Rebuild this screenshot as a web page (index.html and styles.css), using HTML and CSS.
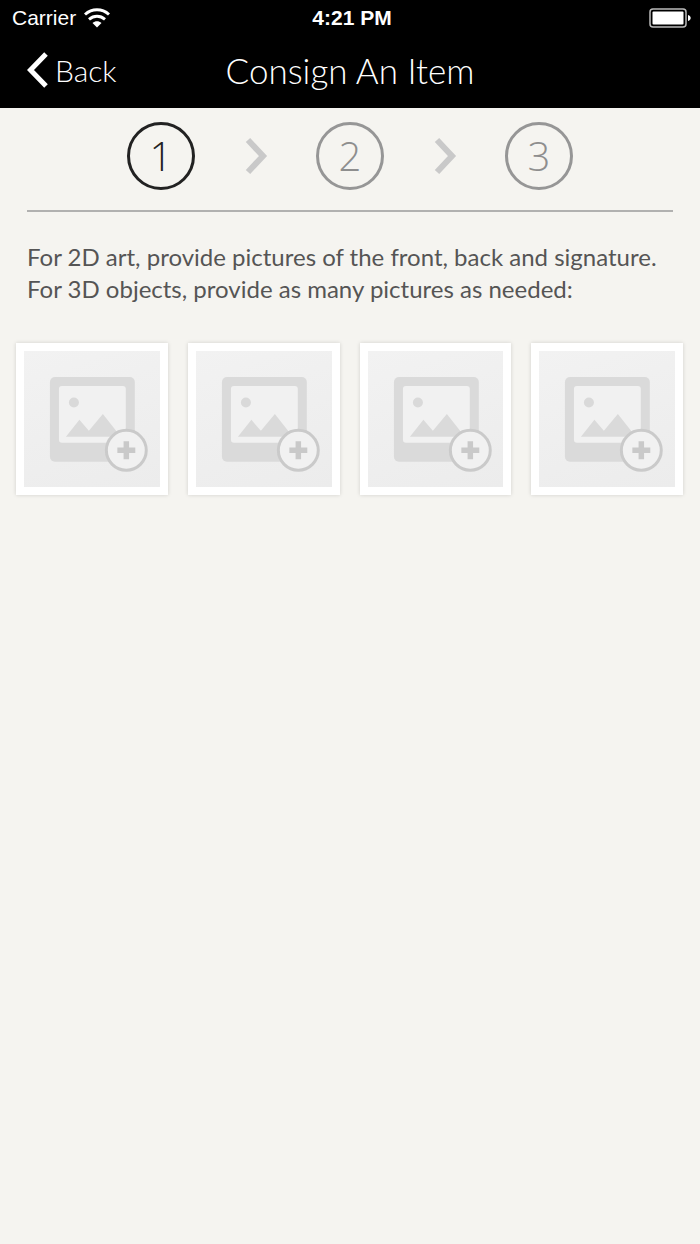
FILE: index.html
```html
<!DOCTYPE html>
<html lang="en">
<head>
    <meta charset="UTF-8">
    <meta name="viewport" content="width=device-width, initial-scale=1.0">
    <title>Consign An Item</title>
    <link rel="stylesheet" href="styles.css">
</head>
<body>
    <header class="header">
        <!-- Status bar -->
        <div class="status-bar">
            <div class="carrier">
                <span>Carrier</span>
                <svg width="26" height="20" viewBox="0 0 26 20" fill="none" stroke="#fff" stroke-width="3">
                    <path d="M1 6.5C8 .2 18 .2 25 6.5"/>
                    <path d="M5 11.300c4.800-4 11.200-4 16 0"/>
                    <path d="M13 19.500L8.500 15c2.700-2.300 6.300-2.300 9 0z" fill="#fff" stroke="none"/>
                </svg>
            </div>
            <span class="time">4:21 PM</span>
            <svg class="battery" width="43" height="20" viewBox="0 0 43 20">
                <rect x="1" y="1" width="36" height="18" rx="3" fill="none" stroke="#bbb" stroke-width="1.500"/>
                <rect x="3.500" y="3.500" width="31" height="13" rx="1" fill="#fff"/>
                <path d="M39 7c3.600 1 3.600 5 0 6z" fill="#fff"/>
            </svg>
        </div>
        <!-- Navigation bar -->
        <nav class="nav-bar">
            <button class="back-button" type="button">
                <svg width="22" height="36" viewBox="0 0 22 36" fill="none" stroke="#fff" stroke-width="5">
                    <path d="M19 2L3.500 18 19 34"/>
                </svg>
                Back
            </button>
            <h1 class="title">Consign An Item</h1>
        </nav>
    </header>

    <main class="content">
        <!-- Step indicator -->
        <ol class="steps">
            <li class="step active">1</li>
            <li class="arrow" aria-hidden="true">
                <svg width="24" height="38" viewBox="0 0 24 38" fill="none" stroke="#c9c9c9" stroke-width="6">
                    <path d="M4 3l15 16L4 35"/>
                </svg>
            </li>
            <li class="step">2</li>
            <li class="arrow" aria-hidden="true">
                <svg width="24" height="38" viewBox="0 0 24 38" fill="none" stroke="#c9c9c9" stroke-width="6">
                    <path d="M4 3l15 16L4 35"/>
                </svg>
            </li>
            <li class="step">3</li>
        </ol>

        <p class="instructions">For 2D art, provide pictures of the front, back and signature.<br>For 3D objects, provide as many pictures as needed:</p>

        <!-- Shared photo placeholder -->
        <svg class="symbols" width="0" height="0">
            <symbol id="add-photo" viewBox="0 0 136 136">
                <rect x="26" y="26" width="85" height="85" rx="5" fill="#dadada"/>
                <rect x="35" y="35" width="67" height="57" rx="3" fill="#f1f1f1"/>
                <circle cx="50" cy="51.500" r="5" fill="#d9d9d9"/>
                <path d="M42 86l13.500-17L65 80l14-17 18 23z" fill="#dadada"/>
                <circle cx="102.500" cy="99.500" r="20" fill="#f1f1f1" stroke="#cacaca" stroke-width="3"/>
                <path d="M102.500 90.500v18M93.500 99.500h18" stroke="#c9c9c9" stroke-width="5.500"/>
            </symbol>
        </svg>

        <div class="photos">
            <button class="photo" type="button" aria-label="Add photo 1"><svg><use href="#add-photo"/></svg></button>
            <button class="photo" type="button" aria-label="Add photo 2"><svg><use href="#add-photo"/></svg></button>
            <button class="photo" type="button" aria-label="Add photo 3"><svg><use href="#add-photo"/></svg></button>
            <button class="photo" type="button" aria-label="Add photo 4"><svg><use href="#add-photo"/></svg></button>
        </div>
    </main>
</body>
</html>
```
FILE: styles.css
```css
body {
    margin: 0;
    min-height: 100vh;
    background-color: #f5f4f0;
    font-family: Lato, "Open Sans", sans-serif;
    font-weight: 300;
}

.header {
    background-color: #000;
    color: #fff;
}

/* Status bar */
.status-bar {
    display: grid;
    grid-template-columns: 1fr auto 1fr;
    align-items: center;
    height: 36px;
    padding: 0 8px 0 12px;
    font-family: "Liberation Sans", Arial, sans-serif;
    font-size: 21px;
    font-weight: 400;
}

.carrier {
    display: flex;
    align-items: center;
    gap: 8px;
}

.time {
    font-weight: 700;
}

.battery {
    justify-self: end;
}

/* Navigation bar */
.nav-bar {
    display: grid;
    grid-template-columns: 1fr auto 1fr;
    align-items: center;
    height: 68px;
    padding: 0 27px 4px;
}

.back-button {
    display: flex;
    align-items: center;
    justify-self: start;
    gap: 6px;
    padding: 0;
    border: 0;
    background: none;
    color: inherit;
    font: inherit;
    font-size: 30px;
    cursor: pointer;
}

.title {
    margin: 0;
    font-size: 35px;
    font-weight: 300;
    line-height: 40px;
}

/* Step indicator */
.steps {
    display: flex;
    align-items: center;
    justify-content: center;
    margin: 0 27px;
    padding: 14px 0 20px;
    border-bottom: 2px solid #b1b1b0;
    list-style: none;
}

.step {
    display: flex;
    align-items: center;
    justify-content: center;
    box-sizing: border-box;
    width: 68px;
    height: 68px;
    border: 3px solid #969696;
    border-radius: 50%;
    color: #8e8e8e;
    font-family: "Open Sans", sans-serif;
    font-size: 40px;
    line-height: 60px;
}

.step.active {
    border-color: #222;
    color: #222;
}

.arrow {
    display: flex;
    justify-content: center;
    width: 121px;
}

.instructions {
    margin: 29px 27px 38px;
    color: #555;
    font-size: 24px;
    font-weight: 400;
    line-height: 32px;
}

.symbols {
    position: absolute;
}

/* Photo slots */
.photos {
    display: grid;
    grid-template-columns: repeat(4, 1fr);
    gap: 20px;
    padding: 0 17px 0 16px;
}

.photo {
    padding: 8px;
    border: 0;
    background-color: #fff;
    box-shadow: 0 0 4px rgba(0, 0, 0, 0.15);
    cursor: pointer;
}

.photo svg {
    display: block;
    width: 100%;
    aspect-ratio: 1;
    background: linear-gradient(160deg, #f2f2f2, #ececec);
}
```
